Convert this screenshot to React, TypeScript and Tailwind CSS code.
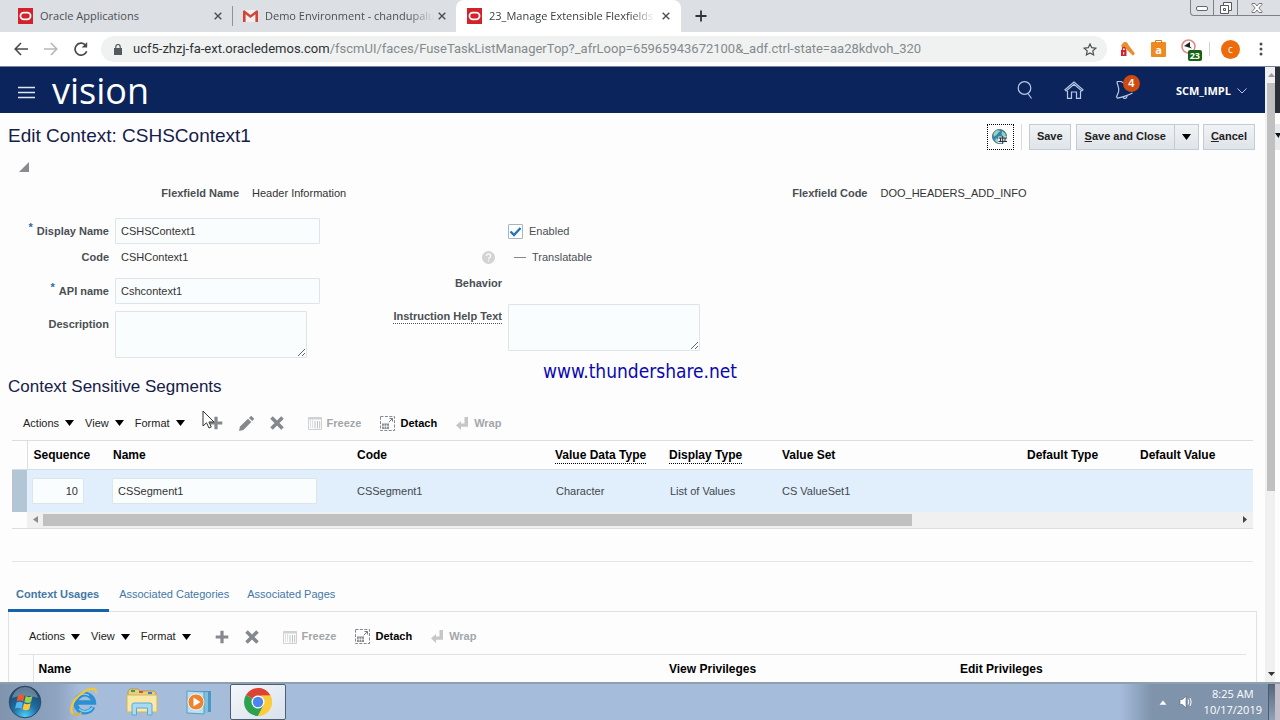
/**
 * Edit Context page (Manage Extensible Flexfields)
 * Browser chrome on top, application page in the middle, desktop taskbar below
 */
import type { ReactNode } from "react";

const uiFont = "font-['Open_Sans','Noto_Sans',sans-serif]";
const labelCls = "shrink-0 text-right font-bold text-[#4a4f54]";
const inputCls =
  "h-[26px] border border-[#dfe4e7] rounded-[1px] bg-[#fafdfe] px-[5px] text-[#333] outline-none";
const areaCls =
  "block h-[47px] w-48 border border-[#dfe4e7] rounded-[1px] bg-[#fafdfe] p-1 outline-none resize";

/* ---------- Icons ---------- */

function OracleIcon() {
  return (
    <svg width="15" height="16" viewBox="0 0 15 16" className="shrink-0">
      <rect width="15" height="16" fill="#d3222a" />
      <rect x="2.4" y="4.7" width="10.2" height="6.6" rx="3.3" fill="none" stroke="#fff" strokeWidth="1.7" />
    </svg>
  );
}

function GmailIcon() {
  return (
    <svg width="15" height="12" viewBox="0 0 15 12" className="mr-[3px] shrink-0">
      <path d="M1 0h13v12H1z" fill="#f1eeee" />
      <path d="M0 1v11h2.6V4.2L7.5 8l4.9-3.8V12H15V1L13.6.2 7.5 5 1.4.2z" fill="#d0453a" />
    </svg>
  );
}

function CloseIcon() {
  return (
    <svg width="8" height="8" viewBox="0 0 8 8">
      <path d="M.7.7l6.6 6.6M7.3.7L.7 7.3" stroke="#4b4f54" strokeWidth="1.4" />
    </svg>
  );
}

function DownTriangle() {
  return (
    <svg width="9" height="6" viewBox="0 0 9 6">
      <path d="M0 0h9L4.5 6z" fill="#000" />
    </svg>
  );
}

function PlusIcon() {
  return (
    <svg width="14" height="14" viewBox="0 0 14 14">
      <path d="M7 .7v12.6M.7 7h12.6" stroke="#85898d" strokeWidth="3.2" />
    </svg>
  );
}

function PencilIcon() {
  return (
    <svg width="15" height="15" viewBox="0 0 15 15" fill="#85898d">
      <path d="M0 15l1-4.4L9 2.8l3.3 3.3L4.4 14z" />
      <path d="M9.9 1.9L11.5.4c.5-.5 1-.4 1.4 0l1.8 1.8c.4.4.4.9 0 1.3l-1.5 1.6z" />
    </svg>
  );
}

function DeleteIcon() {
  return (
    <svg width="14" height="14" viewBox="0 0 14 14">
      <path d="M1.5 1.5l11 11M12.5 1.5l-11 11" stroke="#85898d" strokeWidth="3.6" />
    </svg>
  );
}

function FreezeIcon() {
  return (
    <svg width="14" height="14" viewBox="0 0 14 14" fill="none" stroke="#bfc2c4">
      <path d="M.5 1.5h13v12H.5z" stroke="#cfd1d3" />
      <path d="M.5 2.5h13" strokeWidth="2" stroke="#cfd1d3" />
      <path d="M2.5 4.5v8M4.5 4.5v8" strokeDasharray="1 1" />
      <path d="M7 5v7.5M9.5 5v7.5M11.7 5v7.5" />
    </svg>
  );
}

function DetachIcon() {
  return (
    <svg width="15" height="15" viewBox="0 0 15 15" fill="none" stroke="#777b7f">
      <path d="M.5.5h14v14H.5z" strokeDasharray="3 1.4" strokeWidth=".9" />
      <path d="M2 7.5h7v5.5H2z" fill="#8b8f93" stroke="none" />
      <path d="M4.3 8.5v4M6.6 8.5v4M2 10.3h7" stroke="#fff" strokeWidth=".7" />
      <path d="M8.8 6.2l3.4-3.4M9.5 2.5h3v3" />
    </svg>
  );
}

function WrapIcon() {
  return (
    <svg width="12" height="13" viewBox="0 0 12 13" fill="#c4c6c8">
      <path d="M8.5 0H12v9.8H5V13L0 8.3 5 4v2.6h3.5z" />
    </svg>
  );
}

function GlobeIcon() {
  return (
    <svg width="16" height="16" viewBox="0 0 16 16">
      <circle cx="7.5" cy="7.5" r="7" fill="#3b83ad" stroke="#4d7182" />
      <path d="M3 2.500c2-1.600 4-1.700 5-.8-.3 1.600-2 1.300-2.400 3-.6 1.400-2.400 1.600-3.600 3C1 5.700 1.600 4 3 2.500zM10 2l3 2.500 1 3.500-3-.5L9.600 5zM4 9l3 2-1 3-3-2z" fill="#8fd8bb" />
      <path d="M6 7.500h9.500v6.500H6z" fill="#eef3f4" opacity=".9" />
      <path d="M6.500 9h8.500M6.500 12.500h8.500M10.700 7v8M8.500 9v3.500M13 9v3.500" stroke="#28343a" />
    </svg>
  );
}

function StartOrb() {
  return (
    <svg width="34" height="34" viewBox="0 0 34 34">
      <defs>
        <radialGradient id="orb" cx=".5" cy=".95" r=".9">
          <stop offset="0" stopColor="#4fd0f5" />
          <stop offset=".45" stopColor="#1e6ea6" />
          <stop offset="1" stopColor="#20405f" />
        </radialGradient>
      </defs>
      <circle cx="17" cy="17" r="15.800" fill="url(#orb)" stroke="#2b4a68" />
      <path d="M4 13C6 5 12 2 17 2s11 3 13 11c-8-3-18-3-26 0z" fill="#fff" opacity=".3" />
      <path d="M10 10.500c2.300-1.300 4.500-1.300 6.500 0l-1.300 6c-2-1.200-4.200-1.200-6.500 0z" fill="#ee5a2a" />
      <path d="M17.700 11c2.200 1.200 4.400 1.200 6.800 0l-1.500 6c-2.200 1.200-4.400 1.200-6.600 0z" fill="#9fd04a" />
      <path d="M8.400 17.700c2.300-1.200 4.500-1.200 6.500 0l-1.400 6c-2-1.200-4.200-1.200-6.400 0z" fill="#55b5ee" />
      <path d="M16 18.300c2.200 1.200 4.400 1.200 6.700 0l-1.500 6c-2.200 1.200-4.400 1.200-6.600 0z" fill="#fdc935" />
    </svg>
  );
}

function ExplorerIcon() {
  return (
    <svg width="30" height="30" viewBox="0 0 30 30" fill="none">
      <path d="M24 20a9 9 0 1 1 .8-4.500H9" stroke="#2b8fd2" strokeWidth="4.600" />
      <path d="M23.500 20.500a8.800 8.800 0 0 1-13.500 1.500" stroke="#7fd2f5" strokeWidth="1.600" />
      <path d="M7.500 12c2-4.500 8-6.500 12.500-3.500" stroke="#8fd6f5" strokeWidth="1.200" />
      <path d="M4 27C-1 22 5 11 14 5.500 21 1 27.500 0 27 6" stroke="#f0c63a" strokeWidth="2.400" />
      <path d="M4 27c2.500 1.500 6 .5 8.500-1.500" stroke="#e2b22c" strokeWidth="1.800" />
    </svg>
  );
}

function FolderIcon() {
  return (
    <svg width="32" height="30" viewBox="0 0 32 30">
      <path d="M2 4l2-2h8l2 2h14l2 2v18H2z" fill="#e9cf7c" stroke="#b79a4c" />
      <path d="M5 3h4v2H5z" fill="#3a9e57" />
      <path d="M13 4h4v2h-4z" fill="#d3543d" />
      <path d="M22 5h4v2h-4z" fill="#3a7fc4" />
      <path d="M1 8h30v17H1z" fill="#f9e9a9" stroke="#d2b561" />
      <path d="M6 28V18q0-2 2-2h16q2 0 2 2v10h-4.500v-7h-11v7z" fill="#a9daf3" stroke="#5ea7cf" />
    </svg>
  );
}

function PlayerIcon() {
  return (
    <svg width="26" height="26" viewBox="0 0 26 26">
      <path d="M8 2h17v21H8z" fill="#4d98c0" />
      <path d="M5 3h17v21H5z" fill="#7fc0de" />
      <path d="M1 2l17 1v22L1 24z" fill="#b9dff0" stroke="#5b9cbd" />
      <circle cx="10" cy="13" r="8" fill="#f0822d" stroke="#fff" strokeWidth=".8" />
      <path d="M7.500 8.500l7 4.500-7 4.500z" fill="#fff" />
    </svg>
  );
}

function ChromeIcon() {
  return (
    <svg width="28" height="28" viewBox="0 0 28 28">
      <path d="M14 14L1.900 7A14 14 0 0 1 26.100 7z" fill="#dc4335" />
      <path d="M14 14L26.100 7A14 14 0 0 1 14 28z" fill="#fbcb3c" />
      <path d="M14 14v14A14 14 0 0 1 1.900 7z" fill="#2da150" />
      <path d="M14 7.600h12.400L20 17.500z" fill="#fbcb3c" />
      <path d="M14 7.600h12.400A14 14 0 0 0 14 0z" fill="#dc4335" />
      <path d="M8.500 17.200L14 28l5.600-10.800z" fill="#2da150" />
      <path d="M19.600 17.200L14 28A14 14 0 0 0 26.500 7.600H17z" fill="#fbcb3c" />
      <circle cx="14" cy="14" r="6.500" fill="#fff" />
      <circle cx="14" cy="14" r="5.200" fill="#4a86ee" />
    </svg>
  );
}

/* ---------- Browser chrome ---------- */

function TabStrip() {
  return (
    <div className={`${uiFont} flex h-8 shrink-0 bg-[#dcdfe3] text-[11px] text-[#4b4f54]`}>
      <div className="flex w-[232px] items-center gap-[7px] pl-[18px] pr-[10px]">
        <OracleIcon />
        <span className="min-w-0 flex-1 overflow-hidden whitespace-nowrap">Oracle Applications</span>
        <button aria-label="Close tab"><CloseIcon /></button>
      </div>
      <div className="my-[6px] w-px bg-[#8f949a]" />
      <div className="flex w-[223px] items-center gap-1 px-[10px]">
        <GmailIcon />
        <span className="min-w-0 flex-1 whitespace-nowrap mask-r-from-85%">Demo Environment - chandupalu</span>
        <button aria-label="Close tab"><CloseIcon /></button>
      </div>
      <div className="flex w-[225px] items-center gap-[7px] rounded-t-lg bg-white px-[11px] text-[#3c4043]">
        <OracleIcon />
        <span className="min-w-0 flex-1 whitespace-nowrap mask-r-from-85%">23_Manage Extensible Flexfields</span>
        <button aria-label="Close tab"><CloseIcon /></button>
      </div>
      <button aria-label="New tab" className="ml-[14px]">
        <svg width="12" height="12" viewBox="0 0 12 12">
          <path d="M6 .5v11M.5 6h11" stroke="#333" strokeWidth="1.800" />
        </svg>
      </button>
      <div className="ml-auto flex h-4 w-[90px] rounded-bl border-b border-l border-[#7d8288]">
        <button aria-label="Minimize" className="flex w-[23px] items-center justify-center border-r border-[#7d8288]">
          <svg width="12" height="6" viewBox="0 0 12 6">
            <rect x=".5" y="1.500" width="11" height="4" rx="1.500" fill="#fff" stroke="#62666b" />
          </svg>
        </button>
        <button aria-label="Restore" className="flex w-6 items-center justify-center border-r border-[#7d8288]">
          <svg width="12" height="12" viewBox="0 0 12 12" fill="#fff" stroke="#55595e">
            <path d="M3.500.5h8v8h-8z" />
            <path d="M.5 3.500h8v8h-8z" />
            <path d="M3.500 6.500h2v2h-2z" />
          </svg>
        </button>
        <button aria-label="Close" className="flex flex-1 items-center justify-center pr-1">
          <svg width="12" height="10" viewBox="0 0 12 10">
            <path d="M1 .5h3L6 3 8 .5h3v1L7.800 5 11 8.500v1H8L6 7 4 9.500H1v-1L4.200 5 1 1.500z" fill="#fff" stroke="#73777c" />
          </svg>
        </button>
      </div>
    </div>
  );
}

function AddressBar() {
  return (
    <div className={`${uiFont} flex h-[34px] shrink-0 items-center bg-white pl-[14px] pr-[17px]`}>
      <button aria-label="Back">
        <svg width="14" height="14" viewBox="0 0 14 14" fill="none" stroke="#474b4f" strokeWidth="1.600">
          <path d="M14 7H1.500M7 1L1.200 7 7 13" />
        </svg>
      </button>
      <button aria-label="Forward" className="ml-4">
        <svg width="14" height="14" viewBox="0 0 14 14" fill="none" stroke="#b5b8bb" strokeWidth="1.600">
          <path d="M0 7h12.500M7 1l5.800 6L7 13" />
        </svg>
      </button>
      <button aria-label="Reload" className="ml-4">
        <svg width="14" height="14" viewBox="0 0 14 14" fill="none" stroke="#474b4f" strokeWidth="1.700">
          <path d="M12.700 9.200A6 6 0 1 1 11.200 2.800l1.300 1.500" />
          <path d="M13.200 0v5.500H7.700z" fill="#474b4f" stroke="none" />
        </svg>
      </button>
      <div className="ml-[13px] flex h-[26px] min-w-0 flex-1 items-center rounded-full bg-[#f0f2f2] pl-[13px] pr-[10px]">
        <svg width="8" height="11" viewBox="0 0 8 11" className="shrink-0">
          <path d="M0 4h8v7H0z" fill="#55595e" />
          <path d="M1.800 4.500V2.700a2.200 2.200 0 0 1 4.400 0v1.800" fill="none" stroke="#55595e" strokeWidth="1.200" />
        </svg>
        <div className="ml-[11px] min-w-0 flex-1 overflow-hidden whitespace-nowrap font-[Roboto,sans-serif] text-[13px] text-[#85898c]">
          <span className="text-[#2f3336]">ucf5-zhzj-fa-ext.oracledemos.com</span>
          /fscmUI/faces/FuseTaskListManagerTop?_afrLoop=65965943672100&amp;_adf.ctrl-state=aa28kdvoh_320
        </div>
        <button aria-label="Bookmark">
          <svg width="14" height="13" viewBox="0 0 14 13">
            <path d="M7 1l1.700 3.700 4.100.5-3 2.700.8 4L7 9.900l-3.600 2 .8-4-3-2.700 4.100-.5z" fill="none" stroke="#4b4f54" strokeWidth="1.200" />
          </svg>
        </button>
      </div>
      <div className="ml-[13px] flex items-center">
        <svg width="15" height="15" viewBox="0 0 15 15">
          <path d="M4 0c2-.3 4 .6 4.300 2.800L15 11.500l-2 2.300L5.500 6.500C3 7 1 5 1.300 3z" fill="#e8912c" />
          <rect x="1" y="8" width="5.500" height="6" fill="#d02432" />
          <path d="M2.300 8V6.800a1.500 1.500 0 0 1 3 0V8" fill="none" stroke="#d02432" strokeWidth="1.200" />
          <path d="M3.200 10h1v2.500h-1z" fill="#fff" />
        </svg>
        <div className="relative ml-4 flex h-[15px] w-[15px] items-center justify-center rounded-[1px] bg-[#ee8a20] text-[11px] font-bold leading-none text-white">
          <svg width="7" height="3" viewBox="0 0 7 3" className="absolute -top-[2px] left-1">
            <path d="M.5 3V.5h6V3" fill="none" stroke="#d97a18" />
          </svg>
          a
        </div>
        <div className="relative ml-[15px] h-5 w-5">
          <svg width="17" height="16" viewBox="0 0 17 16">
            <circle cx="7.500" cy="7.500" r="6.500" fill="#fff" stroke="#e08c84" strokeWidth="1.600" />
            <path d="M3 7l6-4v4.500l2 2z" fill="#222" />
          </svg>
          <span className="absolute -right-px bottom-[-2px] rounded-[2px] bg-[#156315] px-[2px] text-[9px] font-bold leading-[11px] text-white">
            23
          </span>
        </div>
        <div className="ml-2 h-[14px] w-px bg-[#d0d2d4]" />
        <button className="ml-[11px] h-[19px] w-[19px] rounded-full bg-[#ec6c0c] text-[10px] leading-none text-white">c</button>
        <svg width="4" height="14" viewBox="0 0 4 14" fill="#4b4f54" className="ml-[19px]">
          <circle cx="2" cy="2" r="1.500" />
          <circle cx="2" cy="7" r="1.500" />
          <circle cx="2" cy="12" r="1.500" />
        </svg>
      </div>
    </div>
  );
}

/* ---------- Application page ---------- */

function AppHeader() {
  return (
    <header className="flex h-[46px] items-center bg-[#0b245b] pl-[18px] pr-[18px] text-white">
      <button aria-label="Navigator" className="mt-1">
        <svg width="17" height="13" viewBox="0 0 17 13">
          <path d="M0 1.500h17M0 6.500h17M0 11.500h17" stroke="#dfe6f2" strokeWidth="1.600" />
        </svg>
      </button>
      <span className={`${uiFont} ml-[17px] pt-[2px] text-[36px] leading-[44px]`}>vision</span>
      <div className="ml-auto flex items-center">
        <button aria-label="Search">
          <svg width="16" height="18" viewBox="0 0 16 18" fill="none" stroke="#b9c9e6" strokeWidth="1.200">
            <circle cx="7.500" cy="7" r="6.300" />
            <path d="M11 12.500l3.500 5" />
          </svg>
        </button>
        <button aria-label="Home" className="ml-[31px]">
          <svg width="20" height="18" viewBox="0 0 20 18" fill="none" stroke="#b9c9e6" strokeWidth="1.200">
            <path d="M1 8.800L10 1l9 7.800-1.200 1.200L10 3.300 2.200 10z" />
            <path d="M3.500 10v7.300h4V11h5v6.300h4V10" />
          </svg>
        </button>
        <button aria-label="Notifications" className="relative ml-[31px]">
          <svg width="20" height="20" viewBox="0 0 20 20" fill="none" stroke="#b9c9e6" strokeWidth="1.200">
            <path d="M2 1.500c0 4 3 6 1.500 10.500L1.500 17l1 1.200C8 17 12 16 17.500 13M2 1.500h4c2 1.500 4 2 6 2" />
            <path d="M8 17c1 2.400 4 1.800 4-1" />
          </svg>
          <span className="absolute -top-[5px] left-2 h-[17px] w-[17px] rounded-full bg-[#cf4a0c] text-[11px] font-bold leading-[17px]">
            4
          </span>
        </button>
        <button className={`${uiFont} ml-[41px] flex items-center gap-[6px] pt-[2px] text-[11px] font-bold`}>
          SCM_IMPL
          <svg width="10" height="6" viewBox="0 0 10 6">
            <path d="M.5.5L5 5 9.500.5" fill="none" stroke="#b9c9e6" />
          </svg>
        </button>
      </div>
    </header>
  );
}

const btnCls =
  "h-[26px] border border-[#c3cbd3] bg-linear-to-b from-[#f0f3f5] to-[#dfe4e9] font-bold text-[#222]";

function TitleBar() {
  return (
    <div className="flex h-[47px] items-center pl-2 pr-[10px]">
      <h1 className="text-[19px] text-[#15204a]">Edit Context: CSHSContext1</h1>
      <button
        aria-label="Translations"
        className="ml-auto flex h-[26px] w-[27px] items-center justify-center border border-dotted border-black"
      >
        <GlobeIcon />
      </button>
      <div className="mx-[7px] h-[26px] w-px bg-[#d9dde1]" />
      <button className={`${btnCls} px-[7px]`}>Save</button>
      <div className="ml-[5px] flex">
        <button className={`${btnCls} border-r-0 px-2`}>
          <span className="underline">S</span>ave and Close
        </button>
        <button aria-label="More save options" className={`${btnCls} px-[7px]`}>
          <DownTriangle />
        </button>
      </div>
      <button className={`${btnCls} ml-1 px-[7px]`}>
        <span className="underline">C</span>ancel
      </button>
    </div>
  );
}

function Field({ label, id, required, children }: { label: string; id?: string; required?: boolean; children: ReactNode }) {
  return (
    <div className="flex gap-[6px]">
      <label htmlFor={id} className={`${labelCls} w-[101px] leading-[26px]`}>
        {required && <span className="relative -top-1 mr-1 text-[#2a6ba8]">*</span>}
        {label}
      </label>
      {children}
    </div>
  );
}

function ContextForm() {
  return (
    <div className="pl-2">
      <button aria-label="Collapse" className="ml-[11px] block h-[13px]">
        <svg width="10" height="10" viewBox="0 0 10 10">
          <path d="M10 0v10H0z" fill="#888c90" />
        </svg>
      </button>
      <div className="mt-[7px] grid grid-cols-2 leading-[26px]">
        <div className="flex gap-[13px]">
          <span className={`${labelCls} w-[231px]`}>Flexfield Name</span>
          <span className="text-[#333]">Header Information</span>
        </div>
        <div className="flex gap-[13px]">
          <span className={`${labelCls} w-[231px]`}>Flexfield Code</span>
          <span className="text-[#333]">DOO_HEADERS_ADD_INFO</span>
        </div>
      </div>
      <div className="mt-3 flex leading-[26px]">
        <div className="w-[312px] shrink-0">
          <Field label="Display Name" id="displayName" required>
            <input id="displayName" defaultValue="CSHSContext1" className={`${inputCls} w-[205px]`} />
          </Field>
          <Field label="Code">
            <span className="pl-[6px] text-[#333]">CSHContext1</span>
          </Field>
          <div className="mt-2">
            <Field label="API name" id="apiName" required>
              <input id="apiName" defaultValue="Cshcontext1" className={`${inputCls} w-[205px]`} />
            </Field>
          </div>
          <div className="mt-[7px]">
            <Field label="Description" id="description">
              <textarea id="description" className={areaCls} />
            </Field>
          </div>
        </div>
        <div className="grow">
          <div className="flex h-[26px] items-center gap-[6px] pl-[188px]">
            <span className="relative flex">
              <input
                id="enabled"
                type="checkbox"
                defaultChecked
                className="peer h-[15px] w-[15px] appearance-none rounded-[1px] border border-[#a9b4bd] bg-white"
              />
              <svg width="15" height="15" viewBox="0 0 15 15" className="pointer-events-none absolute inset-0 hidden peer-checked:block">
                <path d="M2.500 7.500l3.500 3.500 6.500-7" fill="none" stroke="#1d76bb" strokeWidth="2.400" />
              </svg>
            </span>
            <label htmlFor="enabled" className="text-[#4a4f54]">Enabled</label>
          </div>
          <div className="flex h-[26px] items-center pl-[162px]">
            <svg width="13" height="13" viewBox="0 0 13 13">
              <circle cx="6.500" cy="6.500" r="6.500" fill="#d2d3d4" />
              <path d="M4.400 5a2.100 2.100 0 1 1 3.200 1.800c-.8.500-1.100.8-1.100 1.500M6.500 9.200v1.400" fill="none" stroke="#fff" strokeWidth="1.300" />
            </svg>
            <span className="ml-[19px] mr-[6px] h-px w-3 bg-[#888]" />
            <span className="text-[#4a4f54]">Translatable</span>
          </div>
          <div className={`${labelCls} w-[182px]`}>Behavior</div>
          <div className="mt-2 flex gap-[6px]">
            <label htmlFor="helpText" className={`${labelCls} w-[182px] pt-[5px] leading-[14px]`}>
              <span className="inline-block border-b border-dotted border-[#555]">Instruction Help Text</span>
            </label>
            <textarea id="helpText" className={areaCls} />
          </div>
        </div>
      </div>
    </div>
  );
}

function Toolbar({ canEdit }: { canEdit?: boolean }) {
  return (
    <div className="flex h-[34px] items-center">
      <div className="flex gap-[11px]">
        {["Actions", "View", "Format"].map((name) => (
          <button key={name} className="flex items-center gap-[6px] text-[#222]">
            {name}
            <DownTriangle />
          </button>
        ))}
      </div>
      <div className="ml-6 flex gap-4">
        <button aria-label="Add"><PlusIcon /></button>
        {canEdit && <button aria-label="Edit"><PencilIcon /></button>}
        <button aria-label="Delete"><DeleteIcon /></button>
      </div>
      <div className="ml-6 flex gap-[19px] font-bold">
        <button className="flex items-center gap-[5px] text-[#a3a6a9]"><FreezeIcon />Freeze</button>
        <button className="flex items-center gap-[5px] text-black"><DetachIcon />Detach</button>
        <button className="flex items-center gap-[6px] text-[#a3a6a9]"><WrapIcon />Wrap</button>
      </div>
    </div>
  );
}

const segmentColumns = [
  { name: "Sequence", width: "w-20" },
  { name: "Name", width: "w-[244px]" },
  { name: "Code", width: "w-[198px]" },
  { name: "Value Data Type", width: "w-[114px]", hint: true },
  { name: "Display Type", width: "w-[113px]", hint: true },
  { name: "Value Set", width: "w-[245px]" },
  { name: "Default Type", width: "w-[113px]" },
  { name: "Default Value", width: "" },
];

function SegmentsTable() {
  return (
    <div className="ml-3 mr-3 border-b border-[#dcdfe2]">
      <table className="w-full table-fixed border-t border-[#dcdfe2] text-left">
        <thead>
          <tr className="h-[29px] border-b border-[#d3dde5] text-xs text-black">
            <th className="w-[15px] border-r border-[#dcdfe2]" />
            {segmentColumns.map((col) => (
              <th key={col.name} className={`${col.width} whitespace-nowrap px-[6px] font-bold`}>
                <span className={col.hint ? "inline-block border-b border-dotted border-black leading-[15px]" : ""}>
                  {col.name}
                </span>
              </th>
            ))}
          </tr>
        </thead>
        <tbody>
          <tr className="h-[42px] bg-[#e1eefb] text-[#40484f]">
            <td className="bg-[#b3c6d6]" />
            <td className="px-[5px]">
              <input aria-label="Sequence" defaultValue="10" className={`${inputCls} block w-[52px] text-right`} />
            </td>
            <td className="px-[5px]">
              <input aria-label="Name" defaultValue="CSSegment1" className={`${inputCls} block w-[205px]`} />
            </td>
            <td className="px-[6px]">CSSegment1</td>
            <td className="px-[7px]">Character</td>
            <td className="px-[7px]">List of Values</td>
            <td className="px-[6px]">CS ValueSet1</td>
            <td />
            <td />
          </tr>
        </tbody>
      </table>
      {/* Horizontal scrollbar */}
      <div className="ml-[15px] flex h-4 items-center bg-[#f0f0f0] px-[6px]">
        <svg width="5" height="7" viewBox="0 0 5 7"><path d="M5 0v7L0 3.500z" fill="#8d8d8d" /></svg>
        <div className="mx-[5px] flex-1">
          <div className="h-3 w-8/11 bg-[#c0c0c0]" />
        </div>
        <svg width="4" height="7" viewBox="0 0 4 7"><path d="M0 0v7l4-3.500z" fill="#444" /></svg>
      </div>
    </div>
  );
}

function UsagesPanel() {
  return (
    <div className="ml-2 mr-2">
      <nav className="flex gap-[18px] text-[#4377a6]">
        <a href="#usages" className="-mb-px border-b-[3px] border-[#1563ad] pb-[6px] pl-2 pr-[10px] pt-1 font-bold leading-[17px]">
          Context Usages
        </a>
        <a href="#categories" className="-ml-2 pt-1 leading-[17px]">Associated Categories</a>
        <a href="#pages" className="pt-1 leading-[17px]">Associated Pages</a>
      </nav>
      <div className="border border-[#dfe3e7] px-[10px] pt-2">
        <div className="pl-[10px]">
          <Toolbar />
        </div>
        <table className="w-full table-fixed border-t border-[#dfe3e7] text-left text-xs text-black">
          <thead>
            <tr className="h-[30px]">
              <th className="w-[14px] border-r border-[#dfe3e7]" />
              <th className="w-[631px] px-[5px]">Name</th>
              <th className="w-[291px] px-[5px]">View Privileges</th>
              <th className="px-[5px]">Edit Privileges</th>
            </tr>
          </thead>
        </table>
      </div>
    </div>
  );
}

function PageScrollbar() {
  return (
    <div className="flex w-[10px] shrink-0 flex-col items-end bg-[#f0f0f0] py-[6px]">
      <svg width="7" height="4" viewBox="0 0 7 4"><path d="M0 4h7L3.500 0z" fill="#9a9a9a" /></svg>
      <div className="my-[6px] w-full flex-1 pl-[2px]">
        <div className="h-[70%] bg-[#c0c0c0]" />
      </div>
      <svg width="7" height="4" viewBox="0 0 7 4"><path d="M0 0h7L3.500 4z" fill="#333" /></svg>
    </div>
  );
}

/* ---------- Desktop taskbar ---------- */

function Taskbar() {
  return (
    <footer className={`${uiFont} flex h-[38px] shrink-0 items-center border-t-2 border-[#8f9fae] bg-[#a6bcdb] text-[11px] text-white`}>
      <div className="flex h-full w-[230px] shrink-0 items-center bg-linear-to-r from-[#8094ae] via-[#8ea4c1] via-25% to-[#a6bcdb] to-35% pl-2">
        <button aria-label="Start"><StartOrb /></button>
        <button aria-label="Internet Explorer" className="ml-[27px]"><ExplorerIcon /></button>
        <button aria-label="File Explorer" className="ml-[27px]"><FolderIcon /></button>
        <button aria-label="Media Player" className="ml-7"><PlayerIcon /></button>
      </div>
      <button
        aria-label="Chrome"
        className="flex h-full w-14 items-center justify-center rounded-[2px] border border-[#4f5f73] bg-linear-to-br from-[#f4f7fb] to-[#d9e1ec]"
      >
        <ChromeIcon />
      </button>
      <div className="ml-auto flex h-full w-[160px] items-center bg-linear-to-r from-[#a6bcdb] to-[#7f93ab] to-20%">
        <svg width="8" height="5" viewBox="0 0 8 5" className="ml-[39px]">
          <path d="M0 5h8L4 0z" fill="#fff" stroke="#5c6c80" strokeWidth=".4" />
        </svg>
        <svg width="15" height="14" viewBox="0 0 15 14" className="ml-3" fill="none" stroke="#fff">
          <path d="M1 4.500h2.500L7 1v12L3.500 9.500H1z" fill="#fff" stroke="#56657a" strokeWidth=".6" />
          <path d="M9 4.500q1.500 2.500 0 5M11 3q2.500 4 0 8" />
        </svg>
        <div className="ml-auto mr-[6px] text-center leading-4">
          <div>8:25 AM</div>
          <div>10/17/2019</div>
        </div>
        <div className="h-full w-[7px] border-l border-[#4b5a6c] bg-linear-to-b from-[#55667a] to-[#90a2b8]" />
        <div className="h-full w-[5px] bg-[#c3bfc8]" />
      </div>
    </footer>
  );
}

export default function App() {
  return (
    <div className="relative flex h-screen flex-col overflow-hidden bg-white font-['Liberation_Sans',Arial,sans-serif] text-[11px]">
      <TabStrip />
      <AddressBar />
      <div className="flex min-h-0 flex-1 border-t border-[#7483a0]">
        <main className="min-w-0 flex-1 overflow-hidden bg-[#fdfdfd]">
          <AppHeader />
          <TitleBar />
          <ContextForm />
          <h2 className="mt-[17px] pl-2 text-[17px] leading-6 text-[#15204a]">Context Sensitive Segments</h2>
          <div className="mt-[7px] pl-[23px]">
            <Toolbar canEdit />
          </div>
          <SegmentsTable />
          <hr className="mx-3 mb-5 mt-8 border-[#e3e6e9]" />
          <UsagesPanel />
        </main>
        <PageScrollbar />
        {/* Sliver of the neighbouring window */}
        <div className="w-[5px] shrink-0 bg-[#fdfdfd]">
          <div className="h-[46px] bg-[#2b2f38]" />
          <svg width="5" height="26" viewBox="0 0 5 26" className="mt-[11px]">
            <path d="M0 0h5v26H0z" fill="#e6eaed" />
            <path d="M0 9h5v1.500L3.500 14z" fill="#111" />
          </svg>
        </div>
      </div>
      <Taskbar />

      {/* Watermark and mouse pointer float over the page */}
      <div className="pointer-events-none absolute left-[543px] top-[359px] font-['DejaVu_Sans_Condensed','DejaVu_Sans',sans-serif] text-[19px] leading-6 text-[#0808b4]">
        www.thundershare.net
      </div>
      <svg width="13" height="19" viewBox="0 0 13 19" className="pointer-events-none absolute left-[202px] top-[410px]">
        <path d="M1 1v15l3.500-3.200L7 18l2.300-1-2.400-5H12z" fill="#fff" stroke="#333" />
      </svg>
    </div>
  );
}
